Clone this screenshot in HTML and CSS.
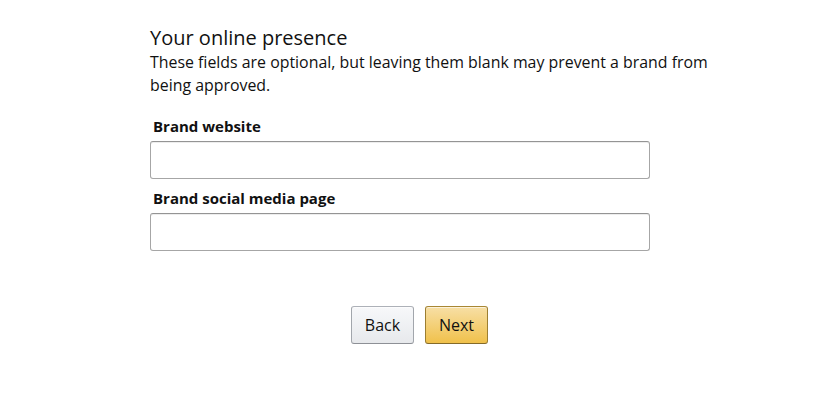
FILE: index.html
```html
<!DOCTYPE html>
<html lang="en">
<head>
    <meta charset="UTF-8">
    <meta name="viewport" content="width=device-width, initial-scale=1.0">
    <title>Your online presence</title>
    <link rel="stylesheet" href="styles.css">
</head>
<body>

<div class="page">
    <h2 class="title">Your online presence</h2>
    <p class="intro">These fields are optional, but leaving them blank may prevent a brand from being approved.</p>

    <form class="fields">
        <label for="website">Brand website</label>
        <input type="text" id="website">

        <label for="social">Brand social media page</label>
        <input type="text" id="social">
    </form>

    <div class="actions">
        <button type="button" class="button-back">Back</button>
        <button type="button" class="button-next">Next</button>
    </div>
</div>

</body>
</html>
```

FILE: styles.css
```css
body {
    font-family: "Open Sans", "Noto Sans", Arial, sans-serif;
    margin: 0;
    padding: 0;
    background-color: #ffffff;
    color: #111111;
}
.page {
    width: 575px;
    padding: 25px 0 0 150px;
}
.title {
    font-size: 20px;
    font-weight: 400;
    line-height: 26px;
    margin: 0;
}
.intro {
    font-size: 15.9px;
    line-height: 23px;
    margin: 0;
}
.fields {
    width: 500px;
    margin-top: 18px;
}
label {
    display: block;
    font-size: 15px;
    font-weight: bold;
    line-height: 22px;
    padding-left: 3px;
    margin-bottom: 4px;
}
input[type="text"] {
    display: block;
    width: 100%;
    height: 38px;
    margin: 0 0 8px 0;
    padding: 3px 7px;
    border: 1px solid #a6a6a6;
    border-top-color: #949494;
    border-radius: 3px;
    box-shadow: 0 1px 0 rgba(255, 255, 255, 0.5), 0 1px 0 rgba(0, 0, 0, 0.07) inset;
    box-sizing: border-box;
    font-size: 15px;
}
.actions {
    display: flex;
    justify-content: center;
    gap: 11px;
    width: 539px;
    margin-top: 55px;
}
.actions button {
    width: 63px;
    height: 38px;
    border-radius: 3px;
    font-family: inherit;
    font-size: 16px;
    color: #111111;
    cursor: pointer;
    box-shadow: 0 1px 0 rgba(255, 255, 255, 0.6) inset;
}
.button-back {
    background: linear-gradient(#f7f8fa, #e7e9ec);
    border: 1px solid #adb1b8;
    border-color: #adb1b8 #a2a6ac #8d9096;
}
.button-next {
    background: linear-gradient(#f7dfa5, #f0c14b);
    border: 1px solid #a88734;
    border-color: #a88734 #9c7e31 #846a29;
}
```
